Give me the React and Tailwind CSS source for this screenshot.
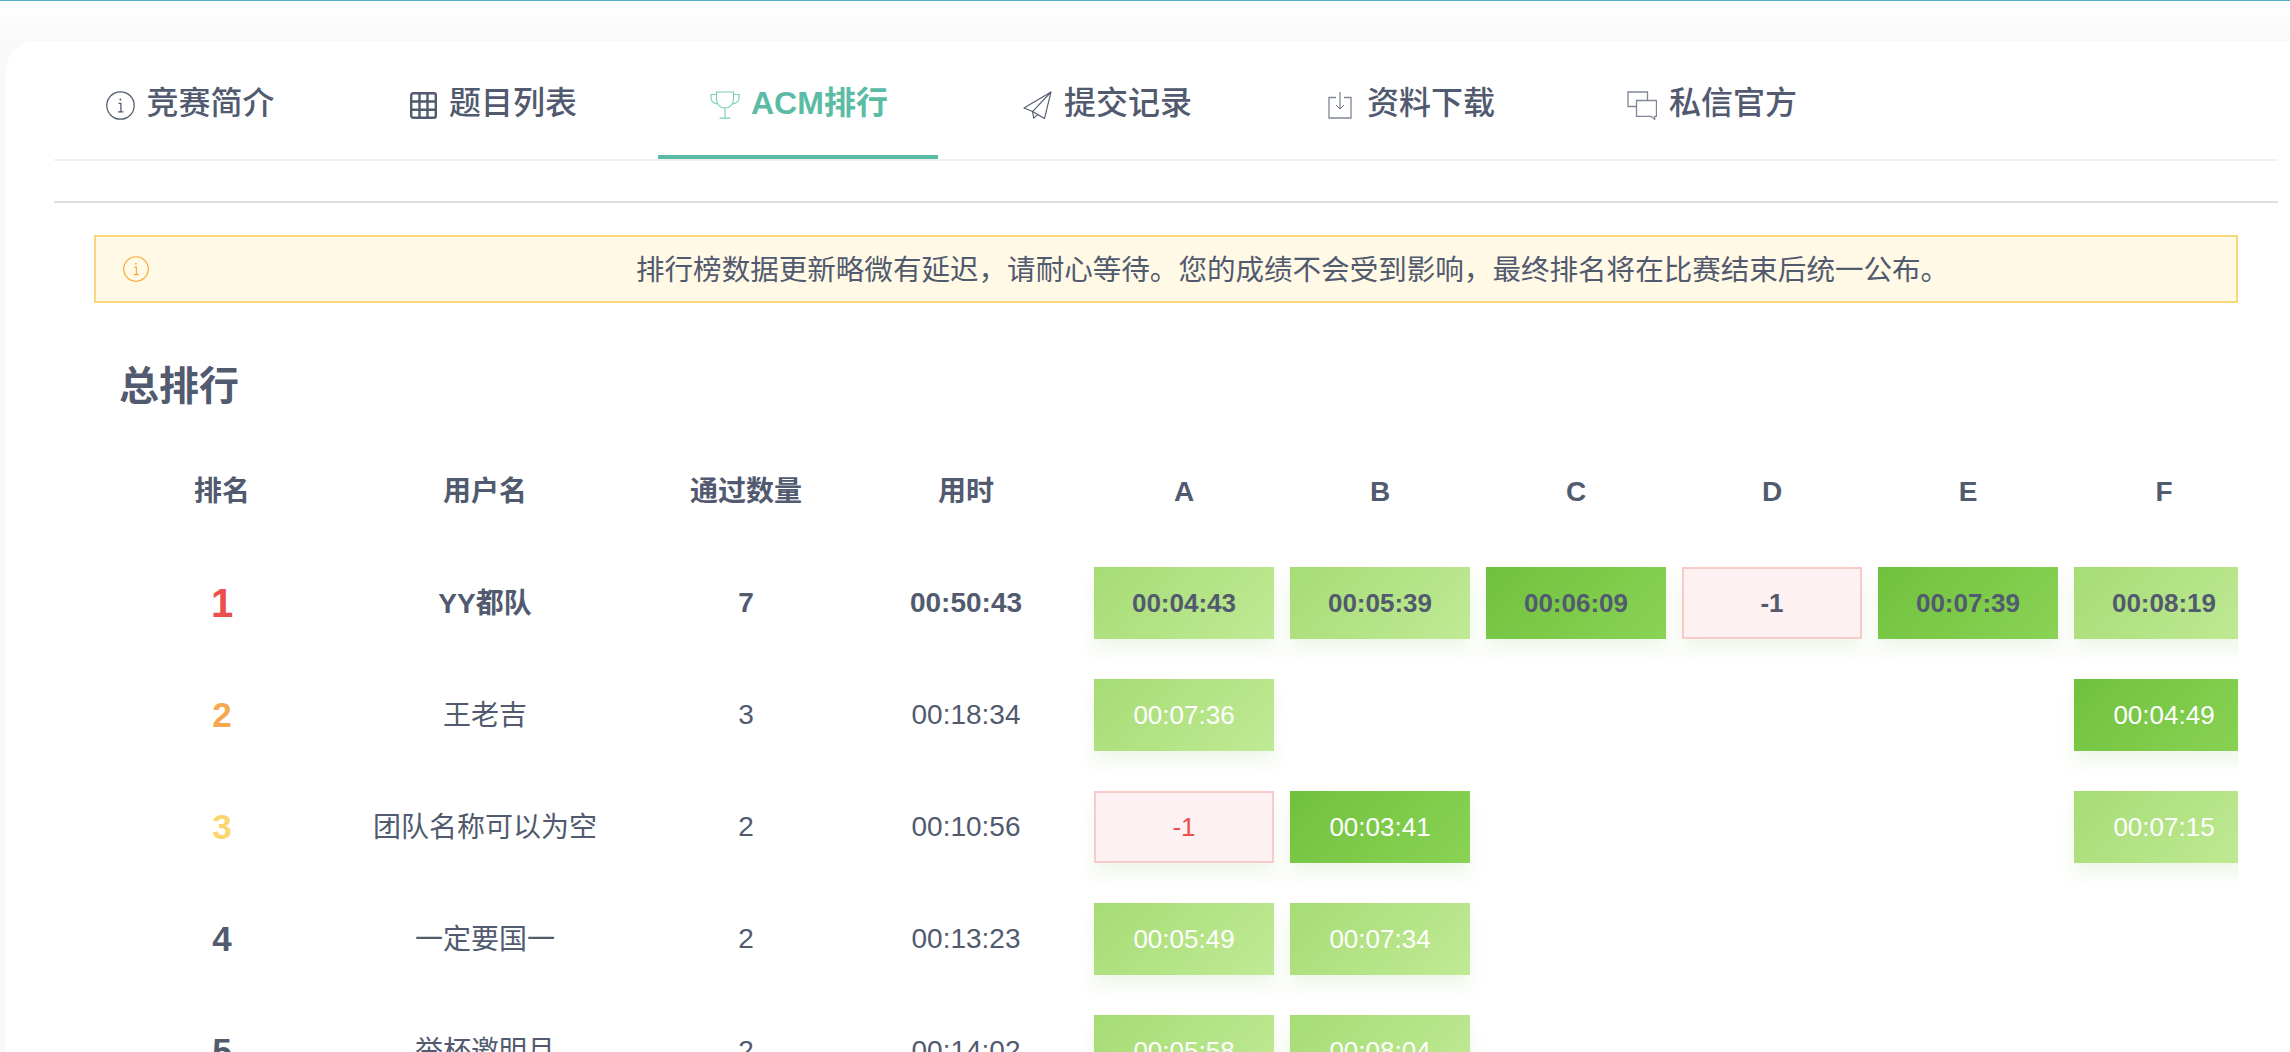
import React from 'react';

const InfoIcon = ({ color }) => (
    <svg viewBox="0 0 29 29" className="w-full h-full" fill="none" stroke={color} strokeWidth="1.25">
        <circle cx="14.5" cy="14.5" r="13.7" />
        <path d="M12.5 12.4h2.4v8.4M12 20.8h5.4" />
        <circle cx="14.4" cy="8.6" r="1" fill={color} stroke="none" />
    </svg>
);

const GridIcon = () => (
    <svg viewBox="0 0 27 27" className="w-full h-full" fill="none" stroke="#515a6e" strokeWidth="2.4">
        <rect x="1.2" y="1.2" width="24.6" height="24.6" rx="2" />
        <path d="M9.5 1.2v24.6M17.5 1.2v24.6M1.2 9.5h24.6M1.2 17.8h24.6" />
    </svg>
);

const TrophyIcon = () => (
    <svg viewBox="0 0 30 28" className="w-full h-full" fill="none" stroke="#7dcfbc" strokeWidth="1.2">
        <path d="M6.5 1h17v7.5c0 5-3.8 8.5-8.5 8.5s-8.5-3.5-8.5-8.5z" />
        <path d="M6.5 3.5H1v3.2c0 3 2.7 5.6 6.6 6.3M23.5 3.5H29v3.2c0 3-2.7 5.6-6.6 6.3" />
        <path d="M15 17v10M9.5 27.2h11" />
    </svg>
);

const PlaneIcon = () => (
    <svg viewBox="0 0 29 28" className="w-full h-full" fill="none" stroke="#515a6e" strokeWidth="1.1" strokeLinejoin="round">
        <path d="M28 1 1 17l8.5 3.6L21.5 27.4z" />
        <path d="M28 1 9.5 20.6l1.2 6.6 4.6-4" />
    </svg>
);

const DownloadIcon = () => (
    <svg viewBox="0 0 24 28" className="w-full h-full" fill="none" stroke="#7f8698" strokeWidth="1.3">
        <path d="M8 6.5H1v20.5h22V6.5h-7" />
        <path d="M12 1v17M8 14l4 4 4-4" stroke="#515a6e" strokeWidth="0.9" />
    </svg>
);

const ChatIcon = () => (
    <svg viewBox="0 0 30 29" className="w-full h-full" fill="none" stroke="#7f8698" strokeWidth="1.3">
        <path d="M9.5 15.5H1V1h19.5v8.5" />
        <path d="M9.5 9.5h20v15.8h-1.8v3l-3.6-3H9.5z" />
    </svg>
);

const tabs = [
    { label: '竞赛简介', icon: <InfoIcon color="#515a6e" />, tab: 'w-[272px] pl-[51.5px]', box: 'w-[29px] h-[29px]', text: 'ml-[12px]' },
    { label: '题目列表', icon: <GridIcon />, tab: 'ml-[33px] w-[268px] pl-[51px]', box: 'w-[27px] h-[27px]', text: 'ml-[12px]' },
    { label: 'ACM排行', icon: <TrophyIcon />, tab: 'ml-[31px] w-[280px] pl-[52px]', box: 'w-[30px] h-[28px]', text: 'ml-[11px]', active: true },
    { label: '提交记录', icon: <PlaneIcon />, tab: 'ml-[33px] w-[269px] pl-[52px]', box: 'w-[29px] h-[28px]', text: 'ml-[12px]' },
    { label: '资料下载', icon: <DownloadIcon />, tab: 'ml-[37px] w-[268px] pl-[51px]', box: 'w-[24px] h-[28px]', text: 'ml-[15px]' },
    { label: '私信官方', icon: <ChatIcon />, tab: 'ml-[30px] w-[270px] pl-[52px]', box: 'w-[30px] h-[29px]', text: 'ml-[12px]' },
];

const L = 'bg-[linear-gradient(135deg,#a7dc75,#c0ea95)]';
const D = 'bg-[linear-gradient(135deg,#70c13e,#8ad354)]';
const F = 'bg-[#fdf1f1] border-2 border-[#f9caca]';

const rows = [
    {
        rank: '1', rankClass: 'text-[40px] text-[#ed4f4f]', name: 'YY都队', pass: '7', time: '00:50:43', bold: true,
        cells: [['00:04:43', L], ['00:05:39', L], ['00:06:09', D], ['-1', F], ['00:07:39', D], ['00:08:19', L]],
    },
    {
        rank: '2', rankClass: 'text-[35px] text-[#f5a84f]', name: '王老吉', pass: '3', time: '00:18:34',
        cells: [['00:07:36', L], null, null, null, null, ['00:04:49', D]],
    },
    {
        rank: '3', rankClass: 'text-[35px] text-[#fbd56e]', name: '团队名称可以为空', pass: '2', time: '00:10:56',
        cells: [['-1', F], ['00:03:41', D], null, null, null, ['00:07:15', L]],
    },
    {
        rank: '4', rankClass: 'text-[35px] text-[#515a6e]', name: '一定要国一', pass: '2', time: '00:13:23',
        cells: [['00:05:49', L], ['00:07:34', L], null, null, null, null],
    },
    {
        rank: '5', rankClass: 'text-[35px] text-[#515a6e]', name: '举杯邀明月', pass: '2', time: '00:14:02',
        cells: [['00:05:58', L], ['00:08:04', L], null, null, null, null],
    },
];

const gridCols = 'grid grid-cols-[204px_322px_200px_240px_repeat(6,196px)] items-center h-[112px] w-max';

const cellText = (row, cell) => {
    if (row.bold) return 'text-[#515a6e]';
    return cell[1] === F ? 'text-[#ed4f4f]' : 'text-white';
};

const App = () => {
    return (
        <div className="h-[1052px] w-full overflow-hidden border-t border-[#4fafc1] bg-[linear-gradient(#ffffff,#f9f9f9_40px)] pt-[40px] pl-[6px] text-[#515a6e] font-['Liberation_Sans','Noto_Sans_CJK_SC',sans-serif]">
            <div className="h-[1100px] rounded-tl-[30px] bg-white pl-[48px] pr-[12px]">
                <div className="flex h-[120px] border-b-2 border-[#f0f0f0]">
                    {tabs.map((tab) => (
                        <div
                            key={tab.label}
                            className={`flex items-center h-[118px] pt-[10px] border-b-4 ${tab.tab} ${tab.active ? 'border-[#5bbba4] text-[#5bbba4] font-bold' : 'border-transparent font-medium'}`}
                        >
                            <span className={`shrink-0 mt-[4px] ${tab.box}`}>{tab.icon}</span>
                            <span className={`text-[32px] leading-[44px] ${tab.text}`}>{tab.label}</span>
                        </div>
                    ))}
                </div>
                <div className="h-[2px] mt-[40px] bg-[#dcdee2]"></div>

                <div className="px-[40px]">
                    <div className="flex items-center h-[68px] mt-[32px] pl-[27px] bg-[#fff9e6] border-2 border-[#f9d67e]">
                        <span className="w-[26px] h-[26px] shrink-0"><InfoIcon color="#f5a623" /></span>
                        <span className="ml-[487px] pt-[2px] text-[28.56px] leading-[40px] whitespace-nowrap">
                            排行榜数据更新略微有延迟，请耐心等待。您的成绩不会受到影响，最终排名将在比赛结束后统一公布。
                        </span>
                    </div>

                    <h2 className="mt-[59px] ml-[25px] text-[40px] leading-[48px] font-bold">总排行</h2>

                    <div className="mt-[25px] pl-[26px] overflow-hidden">
                        <div className={`${gridCols} pt-[2px] text-[28px] font-bold text-center`}>
                            <div>排名</div>
                            <div>用户名</div>
                            <div>通过数量</div>
                            <div>用时</div>
                            {['A', 'B', 'C', 'D', 'E', 'F'].map((p) => <div key={p}>{p}</div>)}
                        </div>

                        {rows.map((row) => (
                            <div key={row.rank} className={`${gridCols} text-[28px] text-center ${row.bold ? 'font-bold' : ''}`}>
                                <div className={`font-bold ${row.rankClass}`}>{row.rank}</div>
                                <div className="pt-[2px]">{row.name}</div>
                                <div>{row.pass}</div>
                                <div>{row.time}</div>
                                {row.cells.map((cell, i) => (
                                    <div key={i} className="px-[8px]">
                                        {cell && (
                                            <div className={`flex items-center justify-center h-[72px] text-[26px] shadow-[0_12px_16px_rgba(120,190,80,0.12)] ${cell[1]} ${cellText(row, cell)}`}>
                                                {cell[0]}
                                            </div>
                                        )}
                                    </div>
                                ))}
                            </div>
                        ))}
                    </div>
                </div>
            </div>
        </div>
    );
};

export default App;
